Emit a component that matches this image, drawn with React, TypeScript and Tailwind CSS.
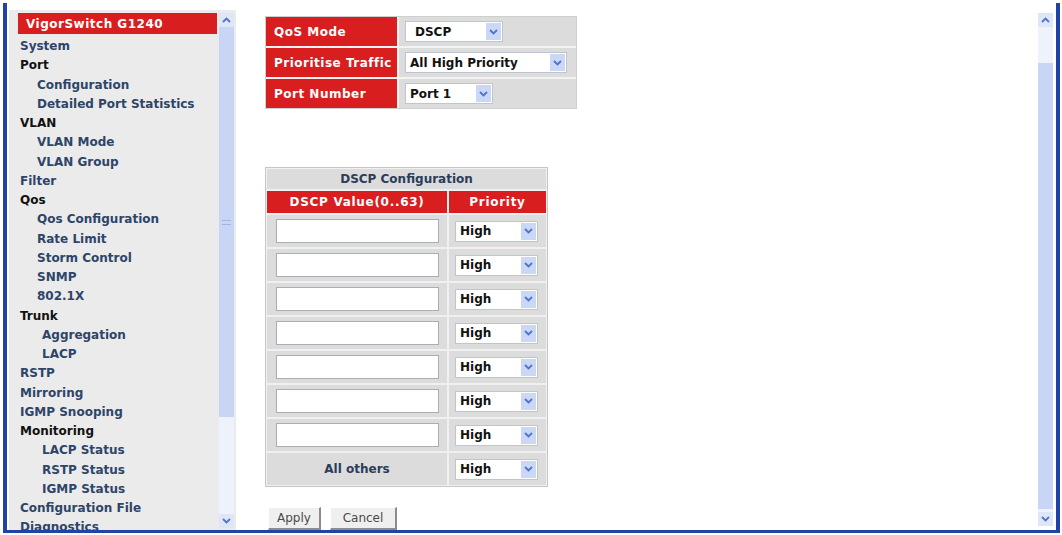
import React from 'react';

type Item = { label: string; level: 0 | 1 | 2; group?: boolean };

const menu: Item[] = [
  { label: 'System', level: 0 },
  { label: 'Port', level: 0, group: true },
  { label: 'Configuration', level: 1 },
  { label: 'Detailed Port Statistics', level: 1 },
  { label: 'VLAN', level: 0, group: true },
  { label: 'VLAN Mode', level: 1 },
  { label: 'VLAN Group', level: 1 },
  { label: 'Filter', level: 0 },
  { label: 'Qos', level: 0, group: true },
  { label: 'Qos Configuration', level: 1 },
  { label: 'Rate Limit', level: 1 },
  { label: 'Storm Control', level: 1 },
  { label: 'SNMP', level: 1 },
  { label: '802.1X', level: 1 },
  { label: 'Trunk', level: 0, group: true },
  { label: 'Aggregation', level: 2 },
  { label: 'LACP', level: 2 },
  { label: 'RSTP', level: 0 },
  { label: 'Mirroring', level: 0 },
  { label: 'IGMP Snooping', level: 0 },
  { label: 'Monitoring', level: 0, group: true },
  { label: 'LACP Status', level: 2 },
  { label: 'RSTP Status', level: 2 },
  { label: 'IGMP Status', level: 2 },
  { label: 'Configuration File', level: 0 },
  { label: 'Diagnostics', level: 0 },
];

const indent = ['pl-[2px]', 'pl-[19px]', 'pl-[24px]'];

function Chevron({ up = false }: { up?: boolean }) {
  return (
    <svg width="9" height="6" viewBox="0 0 9 6">
      <path
        d={up ? 'M1 5 L4.5 1.5 L8 5' : 'M1 1 L4.5 4.5 L8 1'}
        fill="none"
        stroke="#4f73d2"
        strokeWidth="1.8"
      />
    </svg>
  );
}

function ArrowBox({ up = false }: { up?: boolean }) {
  return (
    <div className="h-[14px] w-full flex items-center justify-center bg-[#dfe6f8]">
      <Chevron up={up} />
    </div>
  );
}

function Scrollbar({ thumbTop, thumbHeight, grip }: { thumbTop: number; thumbHeight: number; grip?: boolean }) {
  return (
    <div className="w-[15px] h-full flex flex-col bg-[#eef2fb]">
      <ArrowBox up />
      <div className="flex-1 flex flex-col">
        <div style={{ height: thumbTop }} />
        <div className="bg-[#c9d5f4] flex items-center justify-center" style={{ height: thumbHeight }}>
          {grip && <div className="w-[9px] h-[5px] border-y border-[#9fb3e6]" />}
        </div>
      </div>
      <ArrowBox />
    </div>
  );
}

function Select({ value, width, pad = 'pl-[4px]' }: { value: string; width: string; pad?: string }) {
  return (
    <div className={`${width} h-[21px] bg-white border border-[#bfc5cf] flex items-center`}>
      <span className={`flex-1 ${pad} text-[12px] font-bold text-[#111] whitespace-nowrap`}>{value}</span>
      <div className="w-[15px] h-[17px] mr-[1px] bg-[#cad7f5] flex items-center justify-center">
        <Chevron />
      </div>
    </div>
  );
}

function Sidebar() {
  return (
    <div className="w-[229px] h-full pl-[2px] pt-[7px]">
      <div className="h-full bg-[#ebebeb] flex">
        <div className="flex-1 pl-[9px] pt-[3px] overflow-hidden">
          <div className="h-[21px] w-[199px] bg-[#d81e1e] flex items-center pl-[8px] text-[12px] font-bold tracking-[0.5px] text-white">
            VigorSwitch G1240
          </div>
          <div className="pt-[3px]">
            {menu.map((m) => (
              <div
                key={m.label}
                className={`h-[19.25px] leading-[19.25px] whitespace-nowrap text-[12px] font-bold ${indent[m.level]} ${
                  m.group ? 'text-[#111111]' : 'text-[#2d4568]'
                }`}
              >
                {m.label}
              </div>
            ))}
          </div>
        </div>
        <div className="pt-[3px] pb-[2px] mr-[2px]">
          <Scrollbar thumbTop={0} thumbHeight={390} grip />
        </div>
      </div>
    </div>
  );
}

function ModeForm() {
  const rows = [
    { label: 'QoS Mode', select: <Select value="DSCP" width="w-[98px]" pad="pl-[9px]" /> },
    { label: 'Prioritise Traffic', select: <Select value="All High Priority" width="w-[162px]" /> },
    { label: 'Port Number', select: <Select value="Port 1" width="w-[88px]" /> },
  ];
  return (
    <div className="w-[312px] border border-[#cfcfcf] bg-[#f3f3f3] flex flex-col gap-[2px]">
      {rows.map((r) => (
        <div key={r.label} className="h-[29px] flex gap-[2px]">
          <div className="w-[131px] bg-[#d81e1e] flex items-center pl-[8px] text-[12px] font-bold tracking-[0.5px] text-white whitespace-nowrap">
            {r.label}
          </div>
          <div className="flex-1 bg-[#dcdcdc] flex items-center pl-[6px]">{r.select}</div>
        </div>
      ))}
    </div>
  );
}

function DscpTable() {
  const rows = Array.from({ length: 7 });
  return (
    <div className="w-[283px] border border-[#c6c6c6] bg-[#f0f0f0] p-[1px] flex flex-col gap-[2px]">
      <div className="h-[20px] bg-[#dcdcdc] flex items-center justify-center text-[12px] font-bold text-[#2a3d5a]">
        DSCP Configuration
      </div>
      <div className="h-[22px] flex gap-[2px] text-[12px] font-bold tracking-[0.7px] text-white">
        <div className="w-[180px] bg-[#d81e1e] flex items-center justify-center">DSCP Value(0..63)</div>
        <div className="flex-1 bg-[#d81e1e] flex items-center justify-center">Priority</div>
      </div>
      {rows.map((_, i) => (
        <div key={i} className="h-[32px] flex gap-[2px]">
          <div className="w-[180px] bg-[#dcdcdc] flex items-center pl-[9px]">
            <div className="w-[163px] h-[24px] bg-white border border-[#a9aeb6]" />
          </div>
          <div className="flex-1 bg-[#dcdcdc] flex items-center pl-[6px]">
            <Select value="High" width="w-[83px]" />
          </div>
        </div>
      ))}
      <div className="h-[32px] flex gap-[2px]">
        <div className="w-[180px] bg-[#dcdcdc] flex items-center justify-center text-[12px] font-bold text-[#2a3d5a]">
          All others
        </div>
        <div className="flex-1 bg-[#dcdcdc] flex items-center pl-[6px]">
          <Select value="High" width="w-[83px]" />
        </div>
      </div>
    </div>
  );
}

function Button({ label, width }: { label: string; width: string }) {
  return (
    <button
      className={`${width} h-[23px] bg-[#efefef] border border-t-white border-l-white border-r-[2px] border-b-[2px] border-r-[#8c8c8c] border-b-[#8c8c8c] text-[12px] text-[#4a4a4a]`}
    >
      {label}
    </button>
  );
}

export default function App() {
  return (
    <div className="w-[1062px] h-[535px] bg-white overflow-hidden font-['DejaVu_Sans',sans-serif]">
      <div className="ml-[3px] mt-[3px] w-[1057px] h-[530px] border-l-[4px] border-r-[4px] border-b-[3px] border-[#2143a6] flex">
        <Sidebar />
        <div className="flex-1 flex">
          <div className="flex-1 pl-[29px] pt-[13px]">
            <ModeForm />
            <div className="mt-[58px]">
              <DscpTable />
            </div>
            <div className="mt-[20px] flex gap-[9px] pl-[3px]">
              <Button label="Apply" width="w-[53px]" />
              <Button label="Cancel" width="w-[67px]" />
            </div>
          </div>
          <div className="pt-[10px] pb-[4px] mr-[3px]">
            <Scrollbar thumbTop={36} thumbHeight={446} />
          </div>
        </div>
      </div>
    </div>
  );
}
